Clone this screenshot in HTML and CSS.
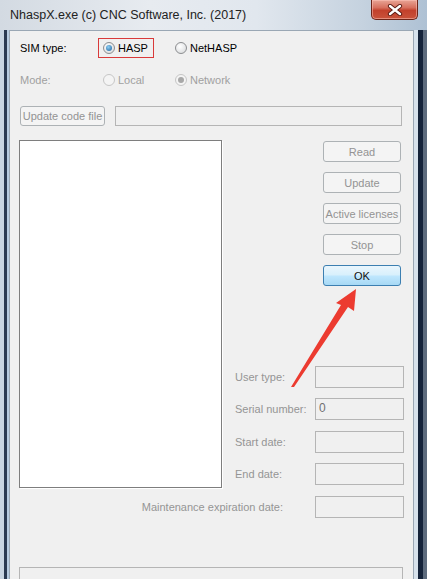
FILE: index.html
```html
<!DOCTYPE html>
<html lang="en">
<head>
<meta charset="UTF-8">
<title>NhaspX.exe</title>
<link rel="stylesheet" href="styles.css">
</head>
<body>
<div class="window">
    <!-- title bar -->
    <div class="titlebar">
        <span class="title">NhaspX.exe (c) CNC Software, Inc. (2017)</span>
        <div class="close">
            <svg width="16" height="12" viewBox="0 0 16 12">
                <path d="M3 2 L13 10 M13 2 L3 10" stroke="#5a1a12" stroke-width="4.2" stroke-linecap="round"/>
                <path d="M3 2 L13 10 M13 2 L3 10" stroke="#ffffff" stroke-width="2.4" stroke-linecap="round"/>
            </svg>
        </div>
    </div>

    <div class="frame">
        <div class="client">
            <div class="row">
                <span class="lbl">SIM type:</span>
                <label class="opt marked"><span class="radio on"></span>HASP</label>
                <label class="opt"><span class="radio"></span>NetHASP</label>
            </div>
            <div class="row row-mode">
                <span class="lbl off">Mode:</span>
                <label class="opt off"><span class="radio"></span>Local</label>
                <label class="opt off"><span class="radio on"></span>Network</label>
            </div>
            <div class="row row-code">
                <div class="btn btn-code">Update code file</div>
                <div class="box box-code"></div>
            </div>

            <div class="main">
                <div class="listbox"></div>
                <div class="side">
                    <div class="btn btn-side">Read</div>
                    <div class="btn btn-side">Update</div>
                    <div class="btn btn-side">Active licenses</div>
                    <div class="btn btn-side">Stop</div>
                    <div class="btn btn-side btn-ok">OK</div>

                    <div class="field first"><span class="flbl">User type:</span><div class="box fbox"></div></div>
                    <div class="field"><span class="flbl">Serial number:</span><div class="box fbox">0</div></div>
                    <div class="field f3"><span class="flbl">Start date:</span><div class="box fbox"></div></div>
                    <div class="field"><span class="flbl">End date:</span><div class="box fbox"></div></div>
                </div>
            </div>

            <div class="field maint"><span class="flbl">Maintenance expiration date:</span><div class="box fbox"></div></div>

            <div class="status"></div>
        </div>
    </div>

    <!-- red pointer arrow drawn over the dialog -->
    <svg class="arrow" width="427" height="579" viewBox="0 0 427 579">
        <polygon points="291,387 341,305 336,303 356,289 354,311 348,307 294,387" fill="#ec3b30"/>
    </svg>
</div>
</body>
</html>
```

FILE: styles.css
```css
* {
    box-sizing: border-box;
}

body {
    margin: 0;
    font-family: "Liberation Sans", Arial, sans-serif;
    font-size: 11px;
    color: #000;
}

.window {
    position: relative;
    width: 427px;
    height: 579px;
    overflow: hidden;
    display: flex;
    flex-direction: column;
    background: linear-gradient(90deg, #d3dae2 0%, #e7ebf0 35%, #e1e7ee 60%, #c5d2df 85%, #aec1d4 100%);
}

/* === title bar === */
.titlebar {
    height: 30px;
    flex: none;
    display: flex;
    justify-content: space-between;
    align-items: flex-start;
    padding-left: 10px;
}

.title {
    font-size: 12.5px;
    line-height: 30px;
    color: #222;
}

.close {
    width: 47px;
    height: 20px;
    margin-right: 9px;
    display: flex;
    align-items: center;
    justify-content: center;
    border: 1px solid #6d2519;
    border-top: none;
    border-radius: 0 0 5px 5px;
    background: linear-gradient(to bottom, #e8a596 0%, #d7705e 40%, #c2412c 55%, #c9533b 100%);
    box-shadow: inset 0 0 0 1px rgba(255, 200, 190, 0.5);
}

/* === frame + client area === */
.frame {
    flex: 1;
    display: flex;
    padding: 0 13px 0 9px;
    background: linear-gradient(90deg, #c8d5e2 0 4px, #2a3a52 4px 7px, #b6cbe0 7px 9px, transparent 9px 414px, #d7e2ec 414px 418px, #15233a 418px 423px, #5d6b7d 423px);
}

.client {
    flex: 1;
    background: #f0f0f0;
    border: 1px solid #9aa7b4;
    border-bottom: none;
    padding: 7px 9px 0 10px;
    display: flex;
    flex-direction: column;
}

.row {
    display: flex;
    align-items: center;
    height: 20px;
}

.row-mode {
    margin-top: 12px;
}

.row-code {
    margin-top: 16px;
}

.lbl {
    width: 78px;
}

.off {
    color: #a0a0a0;
}

.opt {
    width: 72px;
    height: 20px;
    display: flex;
    align-items: center;
    gap: 3px;
    padding: 0 4px;
    border: 1px solid transparent;
}

.opt.marked {
    width: 56px;
    margin-right: 16px;
    border-color: #d93a3a;
}

/* === radio buttons === */
.radio {
    position: relative;
    width: 12px;
    height: 12px;
    flex: none;
    border-radius: 50%;
    border: 1px solid #8c8e90;
    background: radial-gradient(circle at 40% 35%, #ffffff, #d4d6d8);
}

.radio.on::after {
    content: "";
    position: absolute;
    left: 2px;
    top: 2px;
    width: 6px;
    height: 6px;
    border-radius: 50%;
    background: radial-gradient(circle at 40% 35%, #8fd0f4, #1b5f9c);
}

.off .radio {
    border-color: #c6c6c6;
    background: #f4f4f4;
}

.off .radio.on::after {
    background: #a8a8a8;
}

/* === buttons and boxes === */
.btn {
    display: flex;
    align-items: center;
    justify-content: center;
    border: 1px solid #adb2b5;
    border-radius: 3px;
    background: #f4f4f4;
    color: #939393;
    white-space: nowrap;
}

.btn-code {
    width: 85px;
    height: 20px;
}

.box {
    border: 1px solid #b5b5b5;
    background: #f0f0f0;
}

.box-code {
    flex: 1;
    height: 20px;
    margin-left: 10px;
    margin-right: 2px;
}

.main {
    display: flex;
    margin-top: 14px;
    margin-left: -1px;
}

.listbox {
    width: 203px;
    height: 348px;
    background: #fff;
    border: 1px solid #7e7e7e;
    box-shadow: 1px 1px 0 #ffffff;
}

.side {
    flex: 1;
    display: flex;
    flex-direction: column;
    padding-top: 1px;
}

.btn-side {
    width: 78px;
    height: 21px;
    margin-left: 101px;
    margin-bottom: 10px;
}

.btn-ok {
    margin-bottom: 0;
    border-color: #3c7fb1;
    background: linear-gradient(to bottom, #eaf6fd 0%, #d9f0fc 45%, #bee6fd 55%, #a7d9f5 100%);
    color: #111;
}

/* === info fields === */
.field {
    display: flex;
    align-items: center;
    height: 22px;
    margin-top: 10px;
    color: #959595;
}

.field.first {
    margin-top: 80px;
}

.field.f3 {
    margin-top: 11px;
}

.flbl {
    padding-left: 13px;
}

.fbox {
    width: 89px;
    height: 22px;
    margin-left: auto;
    padding: 2px 3px;
    color: #707070;
    font-size: 12px;
}

.maint {
    margin-top: 8px;
    justify-content: flex-end;
}

.maint .flbl {
    padding-left: 0;
    margin-right: 32px;
}

.maint .fbox {
    margin-left: 0;
}

.status {
    height: 30px;
    margin: 49px 1px 0 -1px;
    border: 1px solid #b5b5b5;
    background: #f0f0f0;
}

/* === overlay arrow === */
.arrow {
    position: absolute;
    left: 0;
    top: 0;
    pointer-events: none;
}
```
